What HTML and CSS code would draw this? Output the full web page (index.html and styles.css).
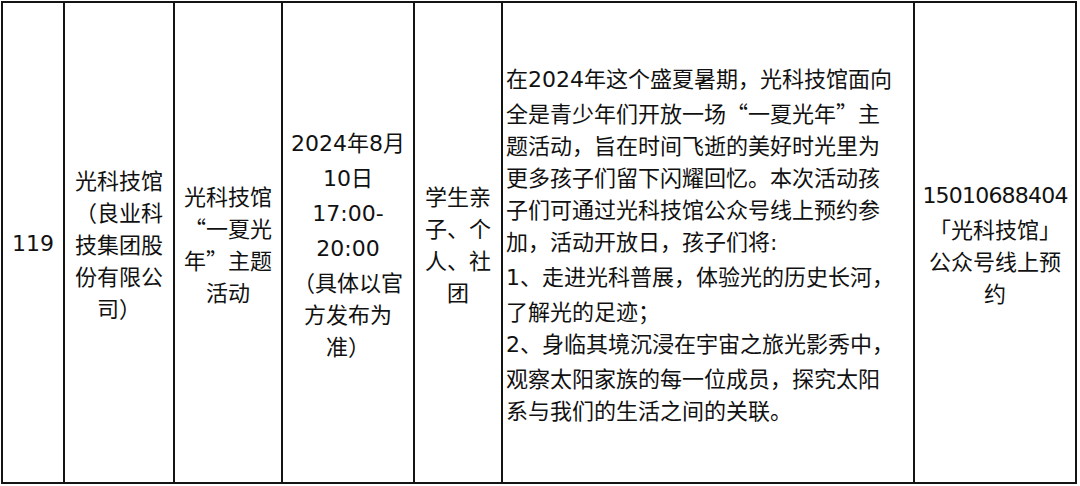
FILE: index.html
```html
<!DOCTYPE html>
<html lang="zh-CN">
<head>
<meta charset="utf-8">
<title>活动表</title>
<link rel="stylesheet" href="styles.css">
</head>
<body>
<table class="sheet">
  <colgroup>
    <col class="c-no">
    <col class="c-org">
    <col class="c-name">
    <col class="c-date">
    <col class="c-who">
    <col class="c-desc">
    <col class="c-contact">
  </colgroup>
  <tbody>
    <tr>
      <td class="cell"><span class="n">119</span></td>
      <td class="cell">光科技馆<br><span class="p">（</span>良业科<br>技集团股<br>份有限公<br>司<span class="p">）</span></td>
      <td class="cell">光科技馆<br><span class="p r">“</span>一夏光<br>年<span class="p">”</span>主题<br>活动</td>
      <td class="cell"><span class="n">2024</span>年<span class="n">8</span>月<br><span class="n">10</span>日<br><span class="n">17:00-</span><br><span class="n">20:00</span><br><span class="p">（</span>具体以官<br>方发布为<br>准<span class="p">）</span></td>
      <td class="cell">学生亲<br>子<span class="p">、</span>个<br>人<span class="p">、</span>社<br>团</td>
      <td class="cell desc">在<span class="n">2024</span>年这个盛夏暑期<span class="p">，</span>光科技馆面向<br>全是青少年们开放一场<span class="p r">“</span>一夏光年<span class="p">”</span>主<br>题活动<span class="p">，</span>旨在时间飞逝的美好时光里为<br>更多孩子们留下闪耀回忆<span class="p">。</span>本次活动孩<br>子们可通过光科技馆公众号线上预约参<br>加<span class="p">，</span>活动开放日<span class="p">，</span>孩子们将<span class="n">:</span><br><span class="n">1</span><span class="p">、</span>走进光科普展<span class="p">，</span>体验光的历史长河<span class="p">，</span><br>了解光的足迹<span class="p">；</span><br><span class="n">2</span><span class="p">、</span>身临其境沉浸在宇宙之旅光影秀中<span class="p">，</span><br>观察太阳家族的每一位成员<span class="p">，</span>探究太阳<br>系与我们的生活之间的关联<span class="p">。</span></td>
      <td class="cell"><span class="n phone">15010688404</span><br><span class="p r">「</span>光科技馆<span class="p">」</span><br>公众号线上预<br>约</td>
    </tr>
  </tbody>
</table>
</body>
</html>
```

FILE: styles.css
```css
html, body {
  margin: 0;
  padding: 0;
  background: #ffffff;
}

body {
  width: 1080px;
  height: 486px;
  overflow: hidden;
}

.sheet {
  margin: 1px 0 0 1px;
  width: 1076px;
  height: 483px;
  border-collapse: collapse;
  table-layout: fixed;
  border: 2px solid #141414;
  font-family: "Noto Sans CJK SC", sans-serif;
  font-size: 22px;
  line-height: 32px;
  color: #111111;
}

.c-no { width: 62px; }
.c-org { width: 110px; }
.c-name { width: 108px; }
.c-date { width: 132px; }
.c-who { width: 88px; }
.c-desc { width: 412px; }
.c-contact { width: 162px; }

.cell {
  border: 2px solid #141414;
  padding: 0 2px;
  text-align: center;
  vertical-align: middle;
  white-space: nowrap;
  overflow: hidden;
}

.desc {
  text-align: left;
  padding: 0 0 0 3px;
}

.n {
  font-family: "DejaVu Sans", sans-serif;
}

.phone {
  letter-spacing: -0.8px;
}

.p {
  display: inline-block;
  width: 1em;
  text-align: left;
  vertical-align: top;
}

.p.r {
  text-align: right;
}
```
